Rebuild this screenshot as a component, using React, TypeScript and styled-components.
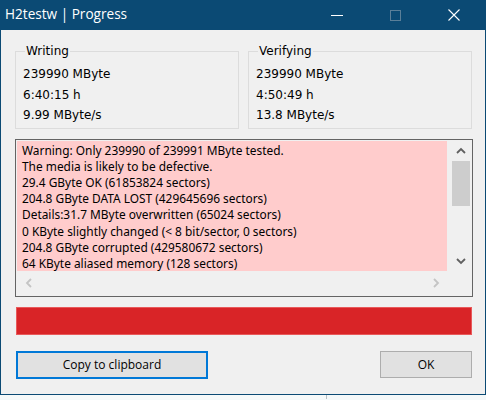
import React from "react";
import styled, { createGlobalStyle } from "styled-components";

const Global = createGlobalStyle`
  html, body { margin: 0; padding: 0; background: #f4f8f9; }
  body { font-family: "DejaVu Sans", "Liberation Sans", sans-serif; }
  * { box-sizing: border-box; }
`;

const Window = styled.div`
  width: 486px;
  border: 1px solid #0b4a74;
  border-top: none;
  background: #f0f0f0;
`;

const TitleBar = styled.div`
  height: 30px;
  margin: 0 -1px;
  background: #0b4a74;
  color: #ffffff;
  display: flex;
  align-items: center;
  padding-left: 5px;
  padding-right: 3px;
  font-family: "Open Sans", "Noto Sans", sans-serif;
  font-size: 13.6px;
`;

const Title = styled.div`
  flex: 1;
  margin-top: -3px;
`;

const Caption = styled.div<{ $dim?: boolean }>`
  width: 58.5px;
  height: 30px;
  display: flex;
  align-items: center;
  justify-content: center;
  color: ${(p) => (p.$dim ? "#5a7f99" : "#ffffff")};
`;

const Client = styled.div`
  padding: 14px 12px 15px 14px;
`;

const Groups = styled.div`
  display: grid;
  grid-template-columns: 224px 224px;
  column-gap: 9px;
`;

const Group = styled.fieldset`
  margin: 0;
  padding: 0 0 2px 0;
  border: 1px solid #dcdcdc;
  min-width: 0;
`;

const Legend = styled.legend`
  margin-left: 9px;
  padding: 0 1px;
  font-size: 12px;
  line-height: 14px;
  color: #000;
`;

const Values = styled.div`
  padding: 6px 0 0 7px;
`;

const Value = styled.div`
  font-size: 12px;
  line-height: 20.5px;
  color: #000;
`;

const Report = styled.div`
  margin-top: 10px;
  width: 458px;
  height: 158px;
  border: 1px solid #646464;
  padding: 1px;
  display: grid;
  grid-template-columns: 430px 24px;
  grid-template-rows: 130px 24px;
`;

const Log = styled.div`
  background: #ffcccc;
  padding: 1px 0 0 5px;
  overflow: hidden;
  white-space: nowrap;
`;

const LogLine = styled.div`
  font-family: "Noto Sans", "DejaVu Sans", sans-serif;
  font-size: 11.9px;
  line-height: 16.2px;
  color: #000;
`;

const VScroll = styled.div`
  background: #f0f0f0;
  display: grid;
  grid-template-rows: 20px 45px 1fr 20px;
  justify-items: center;
  padding-left: 3px;
`;

const ArrowCell = styled.div`
  display: flex;
  align-items: center;
  justify-content: center;
`;

const Thumb = styled.div`
  width: 18px;
  background: #cdcdcd;
`;

const HScroll = styled.div`
  background: #f0f0f0;
  display: flex;
  align-items: center;
  justify-content: space-between;
  padding: 0 7px 0 8px;
`;

const Corner = styled.div`
  background: #f0f0f0;
`;

const Bar = styled.div`
  margin: 10px 0 0 1px;
  width: 456px;
  height: 28px;
  background: #d92427;
  border: 1px solid #e8595a;
`;

const Buttons = styled.div`
  margin: 16px 0 0 1px;
  width: 456px;
  display: flex;
  justify-content: space-between;
  align-items: flex-start;
`;

const Button = styled.button<{ $w: number; $focus?: boolean }>`
  width: ${(p) => p.$w}px;
  height: ${(p) => (p.$focus ? 28 : 27)}px;
  background: #e1e1e1;
  border: ${(p) => (p.$focus ? "2px solid #0078d7" : "1px solid #adadad")};
  font-family: "Open Sans", "Noto Sans", sans-serif;
  font-size: 12px;
  color: #000;
  padding: 0;
  margin: 0;
`;

const Desktop = styled.div`
  height: 4px;
  display: grid;
  grid-template-columns: 327px 1fr;
`;

const DesktopLeft = styled.div`
  border-right: 1px solid #b8c0c4;
  background: #f6f9f9;
`;

const Chevron = ({ dir, color }: { dir: "up" | "down" | "left" | "right"; color: string }) => {
  const d = {
    up: "M1 6 L5 2 L9 6",
    down: "M1 2 L5 6 L9 2",
    left: "M6 1 L2 5 L6 9",
    right: "M2 1 L6 5 L2 9",
  }[dir];
  const vertical = dir === "up" || dir === "down";
  return (
    <svg width={vertical ? 10 : 8} height={vertical ? 8 : 10} viewBox={vertical ? "0 0 10 8" : "0 0 8 10"}>
      <path d={d} fill="none" stroke={color} strokeWidth={1.8} />
    </svg>
  );
};

const lines = [
  "Warning: Only 239990 of 239991 MByte tested.",
  "The media is likely to be defective.",
  "29.4 GByte OK (61853824 sectors)",
  "204.8 GByte DATA LOST (429645696 sectors)",
  "Details:31.7 MByte overwritten (65024 sectors)",
  "0 KByte slightly changed (< 8 bit/sector, 0 sectors)",
  "204.8 GByte corrupted (429580672 sectors)",
  "64 KByte aliased memory (128 sectors)",
];

export default function App() {
  return (
    <>
      <Global />
      <Window>
        <TitleBar>
          <Title>H2testw | Progress</Title>
          <Caption>
            <svg width="12" height="12" viewBox="0 0 12 12">
              <path d="M0 6.5 H12" stroke="currentColor" strokeWidth="1" />
            </svg>
          </Caption>
          <Caption $dim>
            <svg width="11" height="11" viewBox="0 0 11 11">
              <rect x="0.5" y="0.5" width="10" height="10" fill="none" stroke="currentColor" strokeWidth="1" />
            </svg>
          </Caption>
          <Caption>
            <svg width="12" height="12" viewBox="0 0 12 12">
              <path d="M0.5 0.5 L11.5 11.5 M11.5 0.5 L0.5 11.5" stroke="currentColor" strokeWidth="1.1" />
            </svg>
          </Caption>
        </TitleBar>
        <Client>
          <Groups>
            <Group>
              <Legend>Writing</Legend>
              <Values>
                <Value>239990 MByte</Value>
                <Value>6:40:15 h</Value>
                <Value>9.99 MByte/s</Value>
              </Values>
            </Group>
            <Group>
              <Legend>Verifying</Legend>
              <Values>
                <Value>239990 MByte</Value>
                <Value>4:50:49 h</Value>
                <Value>13.8 MByte/s</Value>
              </Values>
            </Group>
          </Groups>
          <Report>
            <Log>
              {lines.map((l) => (
                <LogLine key={l}>{l}</LogLine>
              ))}
            </Log>
            <VScroll>
              <ArrowCell>
                <Chevron dir="up" color="#606060" />
              </ArrowCell>
              <Thumb />
              <div />
              <ArrowCell>
                <Chevron dir="down" color="#606060" />
              </ArrowCell>
            </VScroll>
            <HScroll>
              <Chevron dir="left" color="#c4c4c4" />
              <Chevron dir="right" color="#c4c4c4" />
            </HScroll>
            <Corner />
          </Report>
          <Bar />
          <Buttons>
            <Button $w={192} $focus>
              Copy to clipboard
            </Button>
            <Button $w={92}>OK</Button>
          </Buttons>
        </Client>
      </Window>
      <Desktop>
        <DesktopLeft />
        <div />
      </Desktop>
    </>
  );
}
